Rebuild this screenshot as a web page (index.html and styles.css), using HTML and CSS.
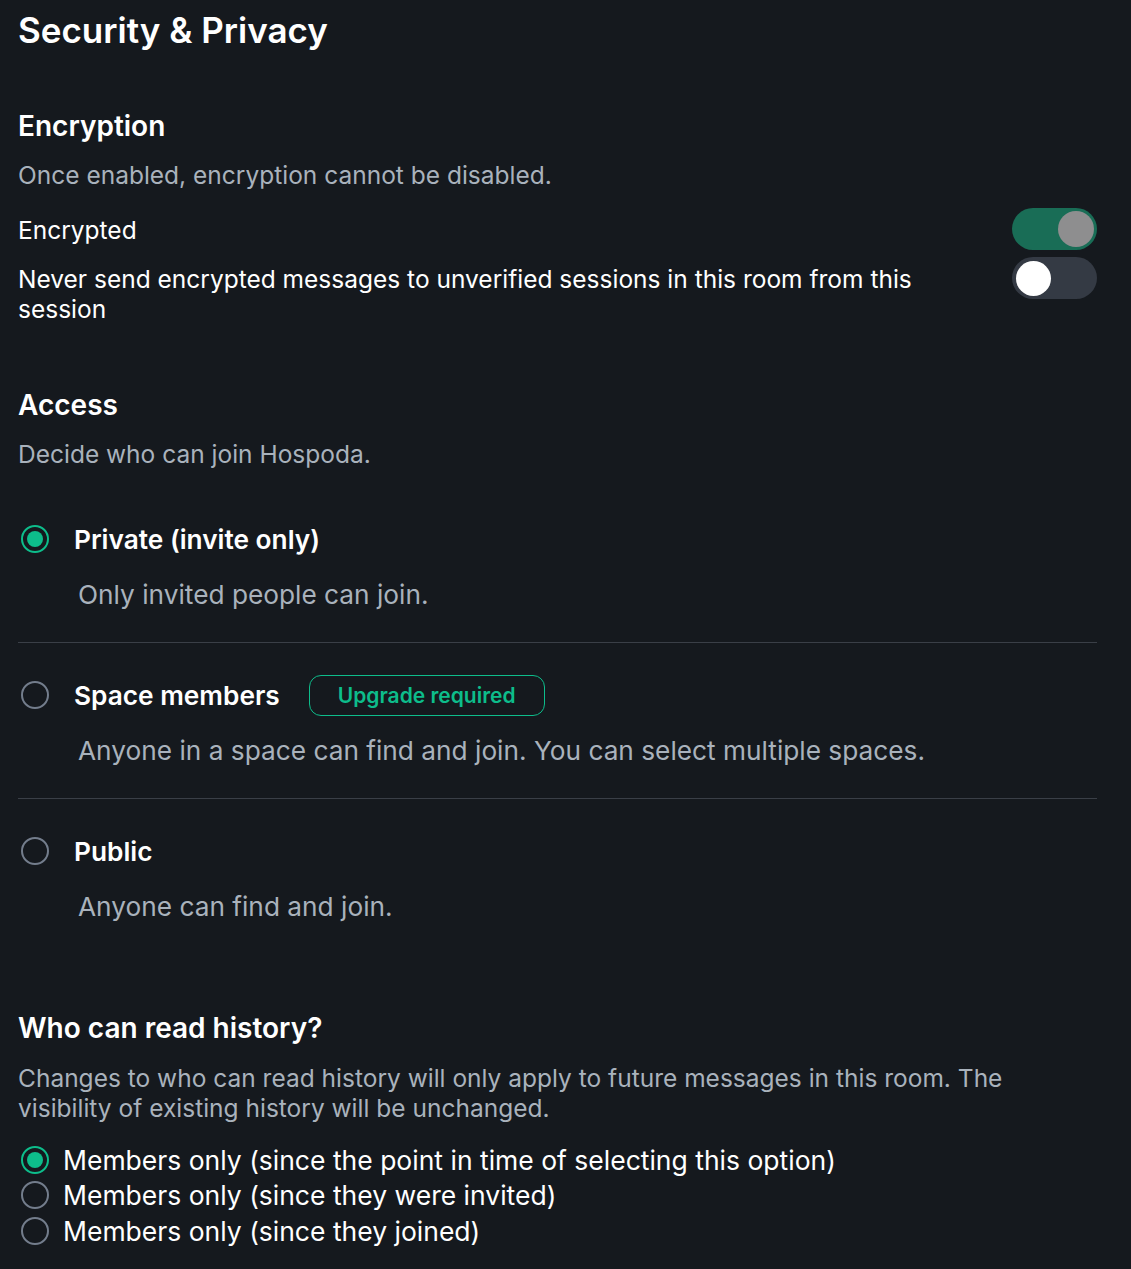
FILE: index.html
```html
<!DOCTYPE html>
<html lang="en">
<head>
<meta charset="utf-8">
<title>Security &amp; Privacy</title>
<link rel="stylesheet" href="styles.css">
</head>
<body>
<main class="page">
  <h1 class="title">Security &amp; Privacy</h1>

  <section class="section enc">
    <h2 class="heading">Encryption</h2>
    <p class="subtext">Once enabled, encryption cannot be disabled.</p>
    <div class="toggle-row first">
      <span class="toggle-label">Encrypted</span>
      <span class="toggle on"><span class="thumb"></span></span>
    </div>
    <div class="toggle-row">
      <span class="toggle-label">Never send encrypted messages to unverified sessions in this room from this session</span>
      <span class="toggle off"><span class="thumb"></span></span>
    </div>
  </section>

  <section class="section access">
    <h2 class="heading">Access</h2>
    <p class="subtext">Decide who can join Hospoda.</p>

    <div class="options">
      <div class="option">
        <div class="option-head">
          <span class="radio checked"></span>
          <span class="option-label">Private (invite only)</span>
        </div>
        <p class="option-desc">Only invited people can join.</p>
      </div>
      <div class="option">
        <div class="option-head">
          <span class="radio"></span>
          <span class="option-label">Space members</span>
          <span class="badge">Upgrade required</span>
        </div>
        <p class="option-desc">Anyone in a space can find and join. You can select multiple spaces.</p>
      </div>
      <div class="option last">
        <div class="option-head">
          <span class="radio"></span>
          <span class="option-label">Public</span>
        </div>
        <p class="option-desc">Anyone can find and join.</p>
      </div>
    </div>
  </section>

  <section class="section history">
    <h2 class="heading">Who can read history?</h2>
    <p class="subtext">Changes to who can read history will only apply to future messages in this room. The visibility of existing history will be unchanged.</p>
    <div class="hist-list">
      <label class="hist-item"><span class="radio checked"></span><span>Members only (since the point in time of selecting this option)</span></label>
      <label class="hist-item"><span class="radio"></span><span>Members only (since they were invited)</span></label>
      <label class="hist-item"><span class="radio"></span><span>Members only (since they joined)</span></label>
    </div>
  </section>
</main>
</body>
</html>
```
FILE: styles.css
```css
* { box-sizing: border-box; }
html, body {
  margin: 0;
  background: #15191e;
}
body {
  font-family: Inter, "Noto Sans", sans-serif;
  color: #ffffff;
  font-size: 24.5px;
}
.page {
  padding: 9px 34px 20px 18px;
}
.title {
  margin: 0;
  font-size: 35px;
  line-height: 42px;
  font-weight: 600;
}
.section { display: flex; flex-direction: column; }
.enc { margin-top: 58px; }
.heading {
  margin: 0;
  font-size: 28px;
  line-height: 34px;
  font-weight: 600;
}
.subtext {
  margin: 17px 0 0;
  font-size: 24.5px;
  line-height: 30px;
  color: #a9b2bc;
}
.toggle-row {
  display: flex;
  justify-content: space-between;
  align-items: flex-start;
  margin-top: 7px;
}
.toggle-row.first { margin-top: 18px; }
.toggle-label {
  flex: 1;
  max-width: 940px;
  margin-top: 7px;
  font-size: 24.5px;
  line-height: 30px;
}
.toggle {
  flex: none;
  width: 85px;
  height: 42px;
  border-radius: 21px;
  display: flex;
  align-items: center;
  padding: 0 4px;
}
.toggle .thumb {
  width: 36px;
  height: 36px;
  border-radius: 50%;
}
.toggle.on {
  background: #196d56;
  justify-content: flex-end;
  padding-right: 3px;
}
.toggle.on .thumb { background: #8e8e8f; }
.toggle.off { background: #343a44; }
.toggle.off .thumb { background: #ffffff; width: 35px; height: 35px; }

.access { margin-top: 64px; }
.options { margin-top: 49px; }
.option {
  border-bottom: 1px solid #3a3f47;
  padding-bottom: 32px;
  margin-bottom: 31px;
}
.option.last { border-bottom: none; margin-bottom: 0; padding-bottom: 0; }
.option-head {
  display: flex;
  align-items: center;
  height: 42px;
}
.radio {
  flex: none;
  width: 28px;
  height: 28px;
  border-radius: 50%;
  border: 2px solid #737d8c;
  margin-left: 3px;
  display: flex;
  align-items: center;
  justify-content: center;
}
.radio.checked { border-color: #0dbd8b; }
.radio.checked::after {
  content: "";
  width: 16px;
  height: 16px;
  border-radius: 50%;
  background: #0dbd8b;
}
.option-label {
  margin-left: 25px;
  font-size: 26.25px;
  font-weight: 600;
}
.badge {
  margin-left: 29px;
  border: 1px solid #0dbd8b;
  border-radius: 12px;
  color: #0dbd8b;
  font-size: 21px;
  font-weight: 600;
  height: 41px;
  padding: 0 28px;
  display: flex;
  align-items: center;
}
.option-desc {
  margin: 20px 0 0 60px;
  font-size: 26.25px;
  line-height: 30px;
  color: #a9b2bc;
}

.history { margin-top: 89px; }
.history .subtext { margin-top: 18px; }
.hist-list {
  margin-top: 19px;
  display: flex;
  flex-direction: column;
}
.hist-item {
  display: flex;
  align-items: center;
  height: 35.5px;
  font-size: 26.5px;
}
.hist-item .radio { margin-right: 14px; }
```
